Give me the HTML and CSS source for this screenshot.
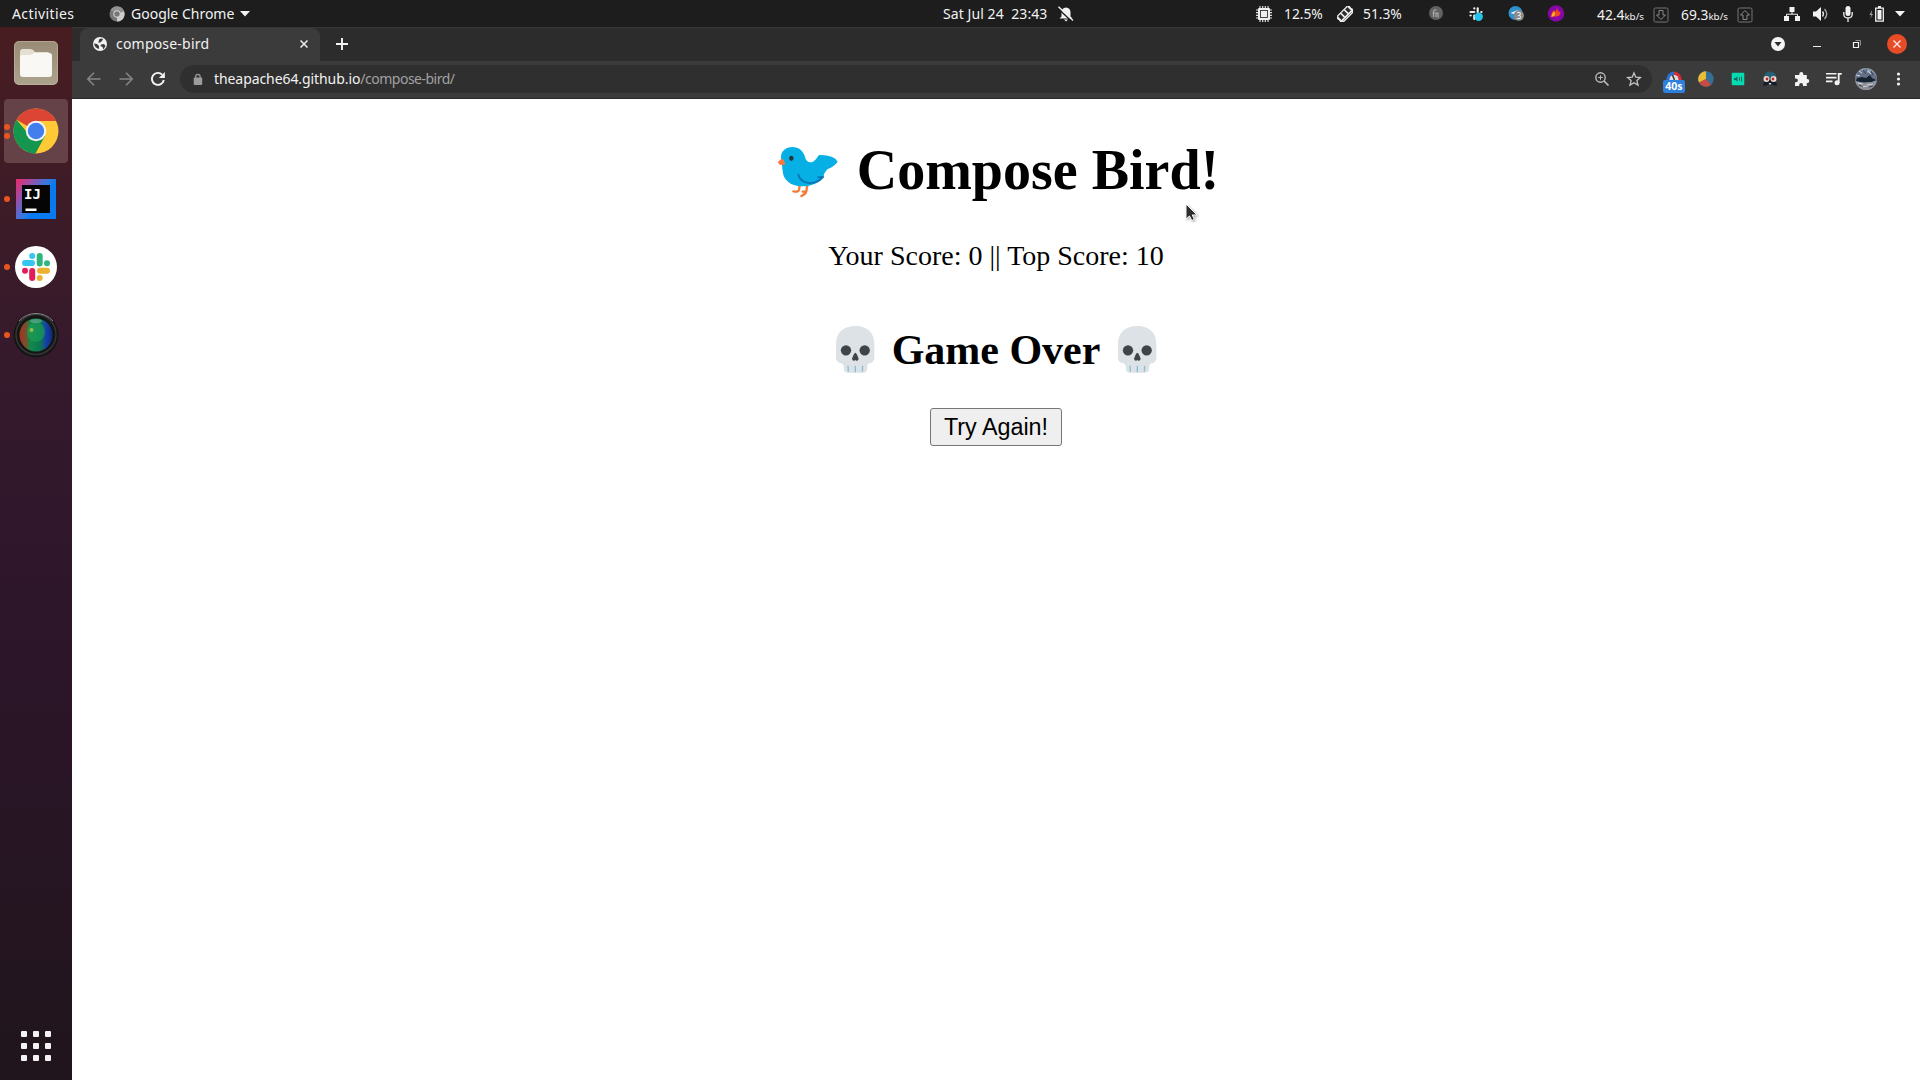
FILE: index.html
```html
<!DOCTYPE html>
<html lang="en">
<head>
<meta charset="utf-8">
<title>compose-bird</title>
<link rel="stylesheet" href="styles.css">
</head>
<body>
<div class="desktop">
  <header class="panel">
    <span class="activities">Activities</span>
    <svg class="app-icon" width="16" height="16" viewBox="0 0 16 16"><circle cx="8" cy="8" r="7.5" fill="#777"/><path d="M8 8L15 5A7.5 7.5 0 0 1 8 15.5z" fill="#ccc"/><path d="M8 8L1.5 4A7.5 7.5 0 0 1 15 5z" fill="#929292"/><circle cx="8" cy="8" r="3.3" fill="#777" stroke="#ddd"/></svg>
    <span class="app-name">Google Chrome</span>
    <svg class="app-caret" width="10" height="6" viewBox="0 0 10 6"><path d="M0 0h10L5 5.5z" fill="#f2f2f2"/></svg>
    <span class="clock">Sat Jul 24&nbsp; 23:43</span>
    <svg class="bell" width="16" height="16" viewBox="0 0 16 16"><path d="M1.500 12.500l2-2V6.500Q3.500 2 8 1.500q4.500.5 4.500 5v4l2 2zM6 13.500h4L8 15.500z" fill="#f2f2f2"/><path d="M0 2.500l14 13" stroke="#1d1d1d" stroke-width="1.500"/><path d="M.5.8L15 14.500" stroke="#f2f2f2" stroke-width="1.300"/></svg>
    <svg class="cpu" width="16" height="16" viewBox="0 0 16 16"><path d="M4 0v16M6.700 0v16M9.300 0v16M12 0v16M0 4h16M0 6.700h16M0 9.300h16M0 12h16" stroke="#ddd" stroke-width="1.200"/><rect x="2" y="2" width="12" height="12" rx="1" fill="#eee"/><rect x="4.500" y="4.500" width="7" height="7" fill="none" stroke="#333" stroke-width=".9"/></svg>
    <span class="cpu-text">12.5%</span>
    <svg class="ram" width="16" height="16" viewBox="0 0 16 16"><g transform="rotate(-45 8 8)"><path d="M-1 3.500h18v3.500q-1 1 0 2v4H-1V9q1-1 0-2z" fill="#eee"/><path d="M1.500 5h3v4.500h-3zM6.500 5h3v4.500h-3zM11.500 5h3v4.500h-3zM2 11.500h12" fill="#2b2b2b" stroke="#2b2b2b" stroke-width=".5"/></g></svg>
    <span class="ram-text">51.3%</span>
    <svg class="tray-a" width="16" height="16" viewBox="0 0 16 16"><circle cx="8" cy="7" r="7" fill="#626262"/><path d="M5.500 11V6q0-2.500 3-2M4.500 7h5.500v4.500M8 7v4" stroke="#aaa" stroke-width="1.200" fill="none"/></svg>
    <svg class="tray-b" width="16" height="16" viewBox="0 0 16 16"><path d="M6.300 2.300v.2M2.500 6h3.800M9.700 2.300V6M13.300 6h.2M6.300 9.500V13M2.500 9.500h.2" stroke="#eee" stroke-width="2.200" stroke-linecap="round"/><circle cx="10.700" cy="10.700" r="4.200" fill="#25c3ea"/></svg>
    <svg class="tray-c" width="16" height="16" viewBox="0 0 16 16"><circle cx="7.500" cy="7" r="7" fill="#2e91ce"/><path d="M2.500 7l7.500-3-2 5-2-1z" fill="#fff"/><circle cx="10.800" cy="9.500" r="5.200" fill="#8b8b8b"/><text x="8.500" y="12.500" font-size="8.500" fill="#fff" class="sans">3</text></svg>
    <svg class="tray-d" width="18" height="18" viewBox="0 0 18 18"><circle cx="9" cy="8.500" r="8.300" fill="#8507a5"/><path d="M4 12Q4 7 7 5l1.500 2L10 3l1.500 3.500 2 .5q0 4-4 4.500-3 0-5.500.5z" fill="#f04a23"/><path d="M4.500 12Q5 7 8 7L7.500 10.500z" fill="#ffb92c"/></svg>
    <span class="net-down">42.4<small>kb/s</small></span>
    <svg class="box-down" width="16" height="16" viewBox="0 0 16 16"><rect x="1" y="1" width="14" height="14" rx="1.500" fill="none" stroke="#777"/><path d="M6 3.500h4V8h2.500L8 12.500 3.500 8H6z" fill="none" stroke="#888"/></svg>
    <span class="net-up">69.3<small>kb/s</small></span>
    <svg class="box-up" width="16" height="16" viewBox="0 0 16 16"><rect x="1" y="1" width="14" height="14" rx="1.500" fill="none" stroke="#777"/><path d="M6 12.500h4V8h2.500L8 3.500 3.500 8H6z" fill="none" stroke="#888"/></svg>
    <svg class="network" width="16" height="14" viewBox="0 0 16 14"><path d="M5.500 0h5v5h-5zM0 9h5v5H0zM11 9h5v5h-5z" fill="#f2f2f2"/><path d="M8 4v3M2.500 10V7.200h11V10" fill="none" stroke="#f2f2f2"/></svg>
    <svg class="volume" width="16" height="14" viewBox="0 0 16 14"><path d="M0 4.500h3L8 0v14L3 9.500H0z" fill="#f2f2f2"/><path d="M9.500 4.500q2 2.500 0 5" fill="none" stroke="#eee" stroke-width="1.300"/><path d="M11.500 2q4.500 5 0 10" fill="none" stroke="#aaa" stroke-width="1.300"/></svg>
    <svg class="mic" width="10" height="16" viewBox="0 0 10 16"><rect x="2.500" y="0" width="5" height="10" rx="2.500" fill="#f2f2f2"/><path d="M.8 6v2.500Q1 12 5 12t4.200-3.500V6M5 12v4" fill="none" stroke="#f2f2f2" stroke-width="1.300"/></svg>
    <svg class="battery" width="15" height="16" viewBox="0 0 15 16"><path d="M3 4L.5 9H2.500L1 13l3-5H2.500z" fill="#aaa"/><path d="M6.700 2.200h7.600v13H6.700z" fill="none" stroke="#f2f2f2" stroke-width="1.300"/><path d="M8.500 4h4v9.500h-4zM9 0h3v2H9z" fill="#f2f2f2"/></svg>
    <svg class="sys-caret" width="10" height="6" viewBox="0 0 10 6"><path d="M0 0h10L5 5.500z" fill="#f2f2f2"/></svg>
  </header>

  <div class="workspace">
    <aside class="dock">
      <div class="dock-item">
        <svg width="46" height="46" viewBox="0 0 46 46"><defs><linearGradient id="fg" x2="0" y2="1"><stop stop-color="#998b75"/><stop offset="1" stop-color="#aca38c"/></linearGradient></defs><rect x="1" y="1" width="44" height="44" rx="5" fill="url(#fg)"/><rect x="1.500" y="1.500" width="43" height="43" rx="5" fill="none" stroke="#c2b7a2" stroke-opacity=".6"/><path d="M7 12q0-3 3-3h7q3 0 5 3h12q3 0 3 3v5H7z" fill="#e5dfd2"/><path d="M7 18q0-3 3-3h7q2 0 4-2h15q3 0 3 3v18q0 3-3 3H10q-3 0-3-3z" fill="#faf8f5"/></svg>
      </div>
      <div class="dock-item active">
        <span class="dots"><i></i><i></i></span>
        <svg width="46" height="46" viewBox="0 0 46 46"><circle cx="23" cy="23" r="22.500" fill="#ffca35"/><path d="M23 23L3.500 11.750A22.500 22.500 0 0 1 42.500 11.750L43 13H23z" fill="#dc4433"/><path d="M3.500 11.750A22.500 22.500 0 0 0 22.500 45.500L32 28 23 23H13z" fill="#15964f"/><circle cx="23" cy="23" r="10.200" fill="#f3f5f8"/><circle cx="23" cy="23" r="8.200" fill="#427fec"/></svg>
      </div>
      <div class="dock-item">
        <span class="dots"><i></i></span>
        <svg width="40" height="40" viewBox="0 0 40 40"><defs><linearGradient id="ij" x2=".7" y2=".5"><stop stop-color="#ed2867"/><stop offset=".35" stop-color="#a54aa0"/><stop offset=".8" stop-color="#307ae2"/><stop offset="1" stop-color="#0879ee"/></linearGradient></defs><path d="M0 0h40v40H0z" fill="url(#ij)"/><path d="M6 6h28v28H6z" fill="#050505"/><path d="M9.500 29.500h11V32h-11z" fill="#fff"/><text x="8" y="20" font-size="14" font-weight="bold" fill="#fff" class="mono">IJ</text></svg>
      </div>
      <div class="dock-item">
        <span class="dots"><i></i></span>
        <svg width="42" height="42" viewBox="0 0 42 42"><circle cx="21" cy="21" r="21" fill="#fff"/><g stroke-width="6" stroke-linecap="round"><path d="M10 17h7M17.200 10v.1" stroke="#36c5f0"/><path d="M24.700 10v7.500M32 17.200v.1" stroke="#2eb67d"/><path d="M17.200 25v7M10 24.700v.1" stroke="#e01e5a"/><path d="M25 24.700h7M24.700 32v.1" stroke="#ecb22e"/></g></svg>
      </div>
      <div class="dock-item">
        <span class="dots"><i></i></span>
        <svg width="46" height="46" viewBox="0 0 46 46"><defs><linearGradient id="ln"><stop stop-color="#a8301f"/><stop offset=".2" stop-color="#75512c"/><stop offset=".33" stop-color="#0f8a4c"/><stop offset=".65" stop-color="#0d7454"/><stop offset=".8" stop-color="#1442a8"/><stop offset="1" stop-color="#0d2a80"/></linearGradient></defs><circle cx="23" cy="23" r="22.500" fill="#151515"/><circle cx="23" cy="22.500" r="20" fill="none" stroke="#353535" stroke-width="1.500"/><path d="M6 9Q13 1.500 23 1.500T40 9" fill="none" stroke="#8c8c8c" stroke-width="1"/><circle cx="23" cy="23" r="16.500" fill="url(#ln)"/><ellipse cx="23" cy="20" rx="9" ry="10" fill="#1fa558" opacity=".55"/><ellipse cx="23" cy="9" rx="6" ry="2" fill="#70b292" opacity=".6"/><circle cx="18.500" cy="18" r="2" fill="#98bd45"/></svg>
      </div>
      <svg class="apps" width="30" height="30" viewBox="0 0 30 30" fill="#f3f1f2"><g id="r"><rect width="6" height="6" rx="1"/><rect x="12" width="6" height="6" rx="1"/><rect x="24" width="6" height="6" rx="1"/></g><use href="#r" y="12"/><use href="#r" y="24"/></svg>
    </aside>

    <section class="browser">
      <div class="tabstrip">
        <div class="tab">
          <svg class="globe" width="14" height="14" viewBox="0 0 14 14"><circle cx="7" cy="7" r="7" fill="#f1f1f1"/><path d="M1 6.500l3 .5 2 2v3q-4-1-5-5.500M6 2.500q3-2 4 0L8 5 5.500 6M8 7.500l3-.5 1.500 2-2 3.500-1-2.500-2-1z" fill="#3b3b3b"/></svg>
          <span class="tab-title">compose-bird</span>
          <svg class="tab-close" width="8" height="8" viewBox="0 0 8 8"><path d="M.5.5l7 7M7.500.5l-7 7" stroke="#eee" stroke-width="1.500"/></svg>
        </div>
        <svg class="new-tab" width="12" height="12" viewBox="0 0 12 12"><path d="M6 0v12M0 6h12" stroke="#f4f4f4" stroke-width="1.900"/></svg>
        <div class="window-buttons">
          <svg viewBox="0 0 40 34"><circle cx="21" cy="17" r="7" fill="#f4f4f4"/><path d="M17.500 15h7L21 19.500z" fill="#2c2c2c"/></svg>
          <svg viewBox="0 0 40 34"><path d="M16 19.500h8" stroke="#eee"/></svg>
          <svg viewBox="0 0 40 34"><path d="M16.500 15.500h5v5h-5z" fill="none" stroke="#f1f1f1" stroke-width="1.200"/><path d="M18.500 13.500h5v5" fill="none" stroke="#8d8d8d"/></svg>
          <svg viewBox="0 0 40 34"><circle cx="20" cy="17" r="10" fill="#e74c26"/><path d="M16.500 13.500l7 7M23.500 13.500l-7 7" stroke="#f8e8e4" stroke-width="1.400"/></svg>
        </div>
      </div>

      <div class="toolbar">
        <svg viewBox="0 0 32 32"><path d="M22.500 16H10.500M16 9.800L9.800 16l6.200 6.200" fill="none" stroke="#858585" stroke-width="1.600"/></svg>
        <svg viewBox="0 0 32 32"><path d="M9.500 16h12M16 9.800l6.200 6.200-6.200 6.200" fill="none" stroke="#858585" stroke-width="1.600"/></svg>
        <svg viewBox="0 0 32 32"><path d="M21.800 17A6 6 0 1 1 20.200 11.700" fill="none" stroke="#f4f4f4" stroke-width="1.900"/><path d="M22.900 9v6h-6z" fill="#f4f4f4"/></svg>
        <div class="omnibox">
          <svg class="lock" width="10" height="13" viewBox="0 0 10 13"><rect x=".7" y="4.500" width="8.500" height="7.500" rx="1" fill="#9c9c9c"/><path d="M2.700 5V3.500a2.200 2.200 0 0 1 4.400 0V5" fill="none" stroke="#9c9c9c" stroke-width="1.200"/></svg>
          <span class="url"><b>theapache64.github.io</b>/compose-bird/</span>
          <svg class="box-icon" viewBox="0 0 32 32"><circle cx="14.500" cy="14.500" r="4.700" fill="none" stroke="#bbb" stroke-width="1.400"/><path d="M18 18l4.500 4.500" stroke="#bbb" stroke-width="1.700"/><path d="M14.500 12.200v4.600M12.200 14.500h4.600" stroke="#bbb"/></svg>
          <svg class="box-icon" viewBox="0 0 32 32"><path d="M16 10l1.800 4.200 4.600.4-3.500 3 1.100 4.500-4-2.400-4 2.400 1.100-4.500-3.500-3 4.600-.4z" fill="none" stroke="#c6c6c6" stroke-width="1.300"/></svg>
        </div>
        <div class="ext-timer">
          <svg viewBox="0 0 32 32"><path d="M8 18a8 9.500 0 0 1 8-9.500V18z" fill="#2c6fd0"/><path d="M16 8.500a8 9.500 0 0 1 8 9.500h-8z" fill="#d32f37"/><circle cx="16" cy="16.500" r="4.500" fill="#dedede"/><path d="M16.500 17l-2-5" stroke="#333" stroke-width="1.500"/></svg>
          <span>40s</span>
        </div>
        <svg viewBox="0 0 32 32"><circle cx="16" cy="16" r="7.700" fill="#346f95"/><path d="M16 16V8.300A7.700 7.700 0 0 0 9 19.500z" fill="#e7bd36"/><path d="M16 16l-7 3.500a7.700 7.700 0 0 0 12 2.300z" fill="#c64c43"/></svg>
        <svg viewBox="0 0 32 32"><rect x="9.700" y="9.700" width="12.600" height="12.600" rx="1" fill="#05dab0"/><path d="M12 15h1.500l2-1.500v5l-2-1.500H12z" fill="#14695c"/><path d="M17.500 14.500v3M19.500 13.500v5" stroke="#14695c"/></svg>
        <svg viewBox="0 0 32 32"><path d="M9.500 15q.5-6.500 6.500-6.500T22.500 15v3h-13z" fill="#256276"/><path d="M9 23q0-6 7-6t7 6l-4-1-3-1-3 1z" fill="#141c2b"/><circle cx="12.500" cy="16" r="2.900" fill="#f1dbcf"/><circle cx="19.500" cy="16" r="2.900" fill="#f1dbcf"/><circle cx="13" cy="16" r="1.400" fill="#b52a2b"/><circle cx="19" cy="16" r="1.400" fill="#b52a2b"/><path d="M14.500 20h3l-1.500 2z" fill="#ddd"/></svg>
        <svg viewBox="0 0 32 32"><path d="M9 12h4.300v-1a2 2 0 0 1 4 0v1h3.500v4h.5a2 2 0 0 1 0 4h-.5v3H17v-1a1.900 1.900 0 0 0-3.800 0v1H9v-3.800h1a1.900 1.900 0 0 0 0-3.800H9z" fill="#f3f3f3"/></svg>
        <svg viewBox="0 0 32 32"><path d="M8 10.800h10.500M8 14.600h10.500M8 18.400h6.500" stroke="#f3f3f3" stroke-width="1.600"/><path d="M20.700 20v-9.200h3" fill="none" stroke="#f3f3f3" stroke-width="1.800"/><circle cx="19" cy="19.700" r="2.500" fill="#f3f3f3"/></svg>
        <svg viewBox="0 0 32 32"><defs><clipPath id="av"><circle cx="16" cy="16" r="11"/></clipPath></defs><g clip-path="url(#av)"><path d="M5 5h22v22H5z" fill="#8c9bb0"/><path d="M5 7l8 1 4-3v5l6-1 4 5v4H5z" fill="#657187"/><path d="M7 15l5-1 4 1 4-3 2 3 4 2-4 2-7 1-5-1-4-1z" fill="#172331"/><path d="M5 21q10-3 22-1v7H5z" fill="#8d8f93"/><path d="M9 8l3 2M18 8l3 3M6 12l4 1M8 20l5 1M17 22l6-1M11 24l6-1" stroke="#d0d8e2"/><path d="M13 7l3 4M21 8l2 4M9 22l4 2M19 24l4-1" stroke="#39434f"/></g></svg>
        <svg viewBox="0 0 32 32" fill="#f2f2f2"><circle cx="16.500" cy="11" r="1.600"/><circle cx="16.500" cy="16" r="1.600"/><circle cx="16.500" cy="21" r="1.600"/></svg>
      </div>

      <main class="page">
        <h1>
          <svg width="70" height="64" viewBox="33 27 210 192"><path d="M119 170l-2 12q-2 8-17 5M142 168l-3 19q-2 9-15 14M139 187l-11 1" fill="none" stroke="#f37b36" stroke-width="7" stroke-linecap="round"/><path d="M63 87C62 66 77 54 97 54c20 0 33 12 38 30 4 16 14 18 24 14 7-3 12-12 18-20q21-1 38 5 13 5 18 15-8 13-31 23-10 10-12 23c-13 18-39 29-65 28-34-1-56-20-57-47z" fill="#07b0e4"/><path d="M64 89l-11 11 7 8 16-1-4-14z" fill="#fa7943"/><path d="M115 137q5 19 27 24 25 6 47-17l-14 1" fill="none" stroke="#0878b8" stroke-width="6" stroke-linecap="round" stroke-linejoin="round"/><ellipse cx="94" cy="88" rx="6.500" ry="8" fill="#28333a"/></svg>
          <span>Compose Bird!</span>
        </h1>
        <p>Your Score: 0 || Top Score: 10</p>
        <h2>
          <svg width="52" height="48" viewBox="87 78 156 144"><path id="sk" d="M108 133c0-36 22-55 58-55s57 19 57 55v40q-1 13-11 16-9 1-10 9l-1 12q-2 8-13 8h-43q-11 0-13-8l-1-12q-1-8-11-9-11-3-12-16z" fill="#dce2e5"/><path d="M144 197l1 18M166 197v20M188 197l-1 18" stroke="#8cbfd6" stroke-width="4"/><circle cx="138" cy="151" r="15.500" fill="#414447"/><circle cx="194" cy="151" r="15.500" fill="#414447"/><path d="M166 158q4 0 10 18-1 7-7 6l-3-2-3 2q-6 1-7-6 6-18 10-18z" fill="#414447"/></svg>
          <span>Game Over</span>
          <svg width="52" height="48" viewBox="87 78 156 144"><use href="#sk"/><path d="M144 197l1 18M166 197v20M188 197l-1 18" stroke="#8cbfd6" stroke-width="4"/><circle cx="138" cy="151" r="15.500" fill="#414447"/><circle cx="194" cy="151" r="15.500" fill="#414447"/><path d="M166 158q4 0 10 18-1 7-7 6l-3-2-3 2q-6 1-7-6 6-18 10-18z" fill="#414447"/></svg>
        </h2>
        <button>Try Again!</button>
      </main>
    </section>
  </div>
  <svg class="pointer" width="14" height="20" viewBox="0 0 14 20"><path d="M1 1v15l3.500-3 2.300 4.500 2.600-1.200L7.200 12H12z" fill="#2d2d2d" stroke="#fff" stroke-width="1"/></svg>
</div>
</body>
</html>
```

FILE: styles.css
```css
* { box-sizing: border-box; }
body { margin: 0; overflow: hidden; background: #fff; }
svg { display: block; flex: none; }
.sans { font-family: "Noto Sans", sans-serif; }
.mono { font-family: "DejaVu Sans Mono", monospace; }

.desktop {
  position: relative;
  display: flex;
  flex-direction: column;
  width: 1920px;
  height: 1080px;
  font-family: "Noto Sans", sans-serif;
  font-size: 14px;
  color: #f2f2f2;
}

/* Top panel */
.panel {
  display: flex;
  align-items: center;
  height: 27px;
  background: #1d1d1d;
  white-space: nowrap;
}
.panel > * { flex: none; }
.activities { width: 62px; margin-left: 12px; letter-spacing: .4px; }
.app-icon { margin-left: 35px; }
.app-name { width: 104px; margin-left: 6px; }
.activities, .app-name, .clock { padding-bottom: 1px; }
.app-caret { margin-left: 5px; }
.clock { width: 108px; margin-left: 693px; letter-spacing: .08px; }
.bell { margin-left: 7px; }
.cpu { margin-left: 182px; }
.cpu-text { width: 41px; margin-left: 12px; }
.ram { margin-left: 12px; }
.ram-text { width: 41px; margin-left: 10px; }
.cpu-text, .ram-text { font-size: 13.8px; }
.tray-a { margin-left: 24px; }
.tray-b { margin-left: 24px; }
.tray-c { margin-left: 24px; }
.tray-d { margin-left: 23px; }
.net-down { width: 48px; margin-left: 32px; }
.net-up { width: 48px; margin-left: 12px; }
.net-down, .net-up { font-size: 13.8px; padding-top: 2px; }
.panel small { font-size: 9.8px; }
.box-down, .box-up { margin: 3px 0 0 8px; }
.network { margin-left: 31px; }
.volume { margin-left: 13px; }
.mic { margin-left: 14px; }
.battery { margin-left: 16px; }
.sys-caret { margin-left: 11px; }

.workspace { display: flex; flex: 1; }

/* Dock */
.dock {
  display: flex;
  flex-direction: column;
  gap: 4px;
  width: 72px;
  padding: 4px 4px 19px;
  background: linear-gradient(#481d21 0, #3f1c26 140px, #351a2c 340px, #2d152a 600px, #20151c 100%);
}
.dock-item {
  position: relative;
  display: flex;
  align-items: center;
  justify-content: center;
  height: 64px;
  border-radius: 4px;
}
.dock-item.active { background: #644248; }
.dots {
  position: absolute;
  left: 0;
  top: 0;
  height: 64px;
  display: flex;
  flex-direction: column;
  justify-content: center;
  gap: 3px;
}
.dots i { width: 6px; height: 6px; border-radius: 50%; background: #e95420; }
.apps { margin: auto auto 0 17px; }

/* Browser */
.browser { display: flex; flex-direction: column; flex: 1; }
.tabstrip {
  display: flex;
  align-items: center;
  height: 34px;
  padding-left: 8px;
  background: #2c2c2c;
  border-top: 1px solid #373737;
}
.tab {
  display: flex;
  align-items: center;
  width: 240px;
  height: 33px;
  padding: 0 12px 1px 13px;
  border-radius: 8px 8px 0 0;
  background: #3b3b3b;
}
.tab-title { margin: -2px auto 0 9px; letter-spacing: .2px; }
.new-tab { margin: 0 0 1px 16px; }
.window-buttons { display: flex; margin: -1px 0 0 auto; padding-right: 3px; }
.window-buttons svg { width: 40px; height: 34px; }

.toolbar {
  display: flex;
  align-items: center;
  height: 38px;
  padding: 0 6px 1px;
  background: #3b3b3b;
  border-bottom: 1px solid #292929;
}
.toolbar > svg, .box-icon, .ext-timer svg { width: 32px; height: 32px; }
.omnibox {
  display: flex;
  align-items: center;
  flex: 1;
  height: 28px;
  margin: 0 6px;
  padding: 0 2px 0 13px;
  border-radius: 14px;
  background: #2f2f2f;
}
.url { margin: -1px auto 0 11px; color: #a1a1a1; letter-spacing: -.5px; }
.url b { font-weight: 400; color: #f1f1f1; letter-spacing: -.08px; }
.ext-timer { position: relative; }
.ext-timer span {
  position: absolute;
  left: 5px;
  top: 17px;
  width: 22px;
  height: 13px;
  border-radius: 2px;
  background: #2f7fdc;
  color: #fff;
  font-size: 10.5px;
  font-weight: 700;
  line-height: 13px;
  text-align: center;
}

/* Game page */
.page {
  display: flex;
  flex-direction: column;
  align-items: center;
  flex: 1;
  padding-top: 39px;
  background: #fff;
  color: #000;
  font-family: "Liberation Serif", serif;
}
h1, h2 { display: flex; }
h1 { gap: 16px; margin: 0 2px 0 0; font-size: 56px; line-height: 64px; }
p { margin: 38px 0 0; font-size: 28px; line-height: 32px; }
h2 { gap: 11px; margin: 54px 0 0; font-size: 42px; line-height: 48px; }
button {
  width: 132px;
  height: 38px;
  margin-top: 34px;
  padding: 0;
  border: 1px solid #767676;
  border-radius: 3px;
  background: #efefef;
  color: #000;
  font: 23.33px "Liberation Sans", sans-serif;
}

.pointer { position: absolute; left: 1185px; top: 203px; filter: drop-shadow(1px 1px 1px rgba(0, 0, 0, .35)); }
```
